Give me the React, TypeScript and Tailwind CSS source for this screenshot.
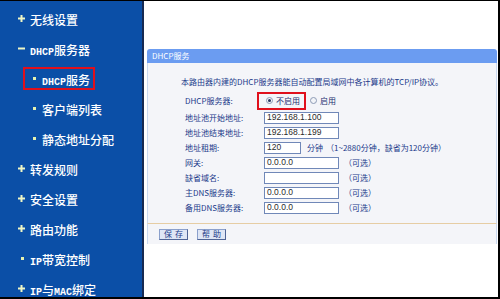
import React from "react";

type Kind = "plus" | "minus" | "sub" | "dot";

const MENU: { kind: Kind; text: string; active?: boolean }[] = [
  { kind: "plus", text: "无线设置" },
  { kind: "minus", text: "DHCP服务器" },
  { kind: "sub", text: "DHCP服务", active: true },
  { kind: "sub", text: "客户端列表" },
  { kind: "sub", text: "静态地址分配" },
  { kind: "plus", text: "转发规则" },
  { kind: "plus", text: "安全设置" },
  { kind: "plus", text: "路由功能" },
  { kind: "dot", text: "IP带宽控制" },
  { kind: "plus", text: "IP与MAC绑定" },
];

const FIELDS = [
  { label: "地址池开始地址:", value: "192.168.1.100" },
  { label: "地址池结束地址:", value: "192.168.1.199" },
  { label: "地址租期:", value: "120", lease: true },
  { label: "网关:", value: "0.0.0.0", optional: true },
  { label: "缺省域名:", value: "", optional: true },
  { label: "主DNS服务器:", value: "0.0.0.0", optional: true },
  { label: "备用DNS服务器:", value: "0.0.0.0", optional: true },
];

function MenuText({ text }: { text: string }) {
  // latin runs drawn narrower, like the half-width glyphs of the original
  const parts = text.split(/([A-Za-z]+)/).filter(Boolean);
  return (
    <span className="text-[12px] font-medium text-white leading-none whitespace-nowrap">
      {parts.map((p, i) =>
        /^[A-Za-z]+$/.test(p) ? (
          <span key={i} className="font-['Liberation_Mono',monospace] text-[10px] font-bold">
            {p}
          </span>
        ) : (
          <span key={i}>{p}</span>
        )
      )}
    </span>
  );
}

function Marker({ kind }: { kind: Kind }) {
  if (kind === "plus")
    return (
      <svg width="7" height="7" viewBox="0 0 7 7" className="shrink-0">
        <rect x="0" y="2.5" width="7" height="2" fill="#eef6c6" />
        <rect x="2.5" y="0" width="2" height="7" fill="#eef6c6" />
      </svg>
    );
  if (kind === "minus")
    return (
      <svg width="7" height="7" viewBox="0 0 7 7" className="shrink-0">
        <rect x="0" y="2.5" width="7" height="2" fill="#eef6c6" />
      </svg>
    );
  return <span className="w-[3px] h-[3px] bg-[#e6f2b0] shrink-0" />;
}

function Sidebar() {
  return (
    <aside className="w-[144px] shrink-0 bg-[#0b4fa7] pt-[2px] border-r-2 border-[#172a52]">
      {MENU.map((m) => (
        <div key={m.text} className="h-[30px] flex items-center">
          {m.kind === "sub" ? (
            m.active ? (
              <div className="ml-[23px] w-[72px] h-[23px] border-2 border-[#e0101c] flex items-center pl-[8px]">
                <Marker kind="sub" />
                <span className="ml-[6px]">
                  <MenuText text={m.text} />
                </span>
              </div>
            ) : (
              <div className="pl-[33px] flex items-center">
                <Marker kind="sub" />
                <span className="ml-[6px]">
                  <MenuText text={m.text} />
                </span>
              </div>
            )
          ) : (
            <div className={m.kind === "dot" ? "pl-[21px] flex items-center" : "pl-[18px] flex items-center"}>
              <Marker kind={m.kind} />
              <span className={m.kind === "dot" ? "ml-[6px]" : "ml-[5px]"}>
                <MenuText text={m.text} />
              </span>
            </div>
          )}
        </div>
      ))}
    </aside>
  );
}

function Radio({ checked }: { checked?: boolean }) {
  return (
    <span className="w-[7px] h-[7px] rounded-full border border-[#8d9bb5] bg-[#f2f4f8] flex items-center justify-center shrink-0">
      {checked && <span className="w-[3px] h-[3px] rounded-full bg-[#24345e]" />}
    </span>
  );
}

function Field({ value, w }: { value: string; w: string }) {
  return (
    <div
      className={`${w} h-[12px] bg-white border border-[#7088b8] pl-[2px] flex items-center font-['Liberation_Sans',Arial,sans-serif] text-[8.5px] text-[#2b2b2b] leading-none`}
    >
      {value}
    </div>
  );
}

export default function App() {
  return (
    <div className="w-[500px] h-[299px] flex bg-white border-t border-r-2 border-b-2 border-black overflow-hidden font-['Noto_Sans_CJK_SC','Noto_Sans',sans-serif]">
      <Sidebar />
      <main className="flex-1 pt-[48px] pl-[3px] pr-[1px]">
        <div className="flex flex-col">
          <div className="h-[14px] bg-[#6b9cf1] rounded-t-[3px] pl-[5px] flex items-center text-[8px] text-white leading-none">
            DHCP服务
          </div>
          <div className="bg-[#f4f5f9] border-x border-[#c9d8ef] border-b border-b-[#e6cda4] pt-[13px] pb-[8px] text-[8px] text-[#223a8a] leading-none">
            <div className="pl-[33px] h-[12px] flex items-center whitespace-nowrap">
              本路由器内建的DHCP服务器能自动配置局域网中各计算机的TCP/IP协议。
            </div>
            <div className="mt-[3px] pl-[37px]">
              <div className="h-[19px] flex items-center">
                <span className="w-[72px]">DHCP服务器:</span>
                <div className="w-[49px] h-[18px] border-2 border-[#e0101c] flex items-center pl-[7px]">
                  <Radio checked />
                  <span className="ml-[3px] text-[#1c2f70]">不启用</span>
                </div>
                <span className="ml-[4px]">
                  <Radio />
                </span>
                <span className="ml-[3px] text-[#1c2f70]">启用</span>
              </div>
              {FIELDS.map((f) => (
                <div key={f.label} className="h-[15px] flex items-center whitespace-nowrap">
                  <span className="w-[79px]">{f.label}</span>
                  <Field value={f.value} w={f.lease ? "w-[37px]" : "w-[75px]"} />
                  {f.lease && (
                    <>
                      <span className="ml-[6px]">分钟</span>
                      <span className="ml-[3px]">（1~2880分钟，缺省为120分钟）</span>
                    </>
                  )}
                  {f.optional && <span className="ml-[5px]">（可选）</span>}
                </div>
              ))}
            </div>
          </div>
          <div className="h-[20px] bg-[#f4f5f9] border-x border-[#c9d8ef] pl-[11px] flex items-center gap-[9px]">
            {["保存", "帮助"].map((b) => (
              <button
                key={b}
                className="w-[29px] h-[11px] bg-[#dfe6f5] border border-[#8ba0cc] border-r-[#4f6496] border-b-[#4f6496] flex items-center justify-center text-[8px] text-[#223a8a] tracking-[3px] pl-[3px] leading-none"
              >
                {b}
              </button>
            ))}
          </div>
        </div>
      </main>
    </div>
  );
}
